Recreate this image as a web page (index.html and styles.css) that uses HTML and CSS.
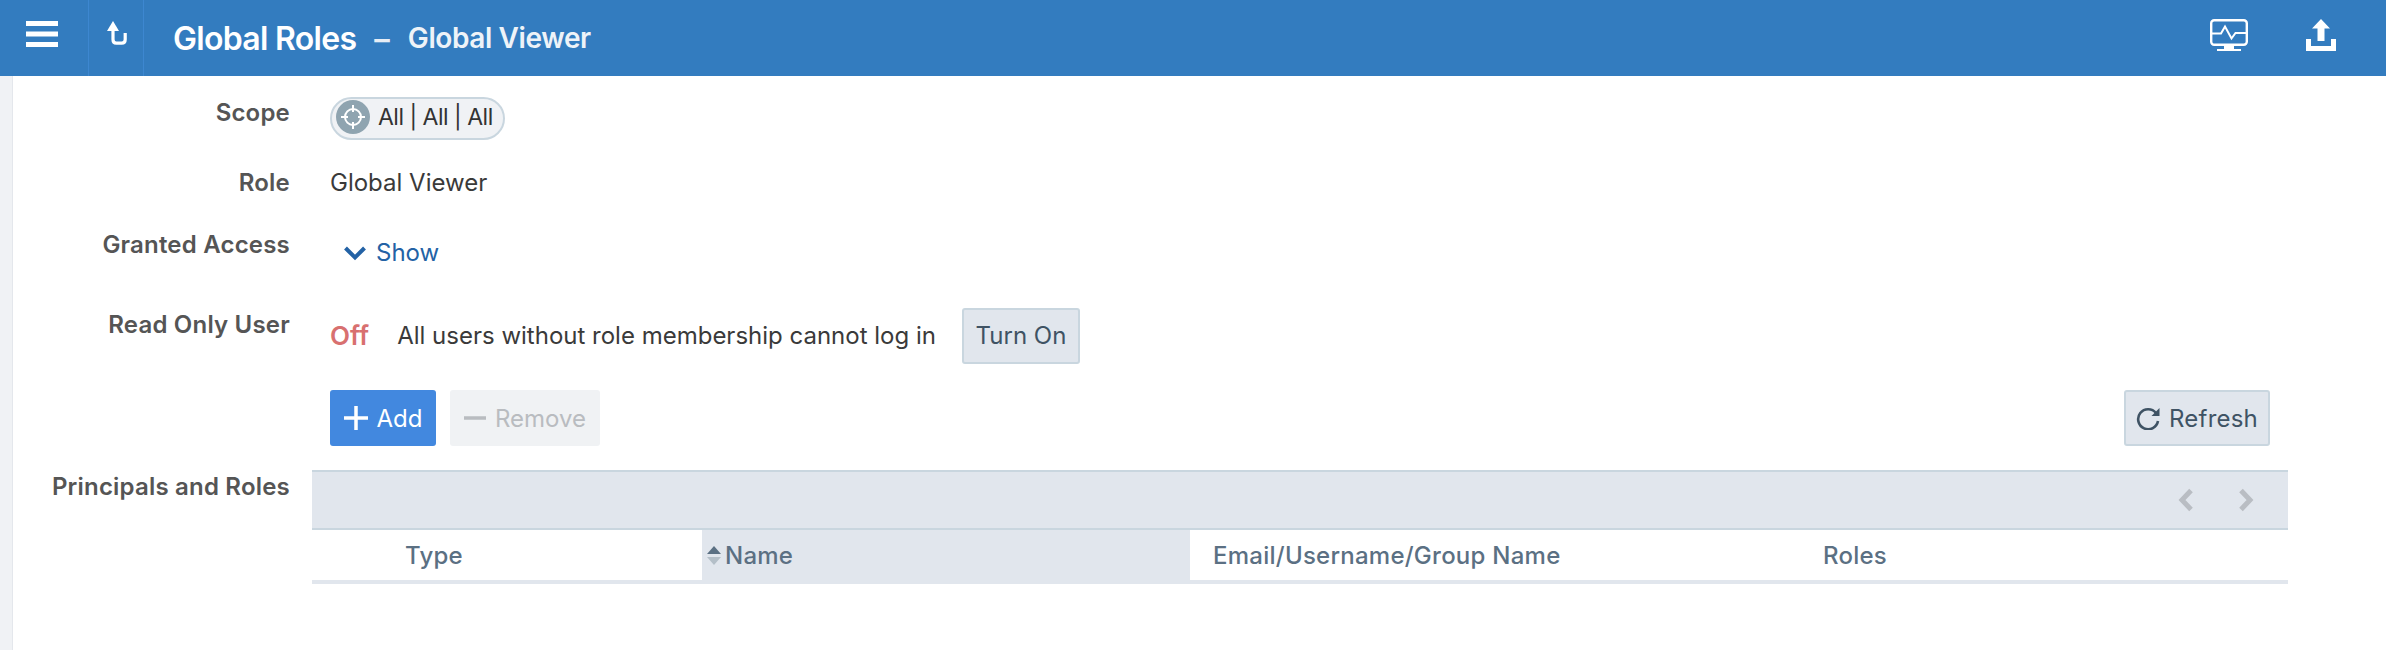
FILE: index.html

```html
<!DOCTYPE html>
<html lang="en">
<head>
  <meta charset="UTF-8" />
  <title>Global Roles - Global Viewer</title>
  <link rel="stylesheet" href="styles.css">
</head>
<body>
  <header class="topbar">
    <button class="bar-btn menu-btn" aria-label="Menu">
      <svg width="32" height="26" viewBox="0 0 32 26"><path d="M0 2.500h32M0 13h32M0 23.500h32" stroke="#fff" stroke-width="5" fill="none"/></svg>
    </button>
    <button class="bar-btn back-btn" aria-label="Up">
      <svg width="20" height="24" viewBox="0 0 20 24"><path d="M6 6v12.500c0 2.300 1 3.700 3.300 3.700h5.400c2.300 0 3.500-1.400 3.500-3.700V12" stroke="#fff" stroke-width="3.200" fill="none"/><path d="M6 0l6 10H0z" fill="#fff"/></svg>
    </button>
    <div class="title">
      <span class="title-main">Global Roles</span>
      <span class="title-dash">–</span>
      <span class="title-sub">Global Viewer</span>
    </div>
    <div class="bar-icons">
      <svg width="38" height="32" viewBox="0 0 38 32" fill="none" stroke="#fff"><rect x="1.200" y="1.200" width="35.600" height="24.600" rx="3" stroke-width="2.400"/><path d="M2 14.500h9l4-7 6.500 12 4-5.500H36" stroke-width="2"/><path d="M14 27h10v3H14z" fill="#fff" stroke="none"/><path d="M7 30h24v2H7z" fill="#fff" stroke="none"/></svg>
      <svg width="30" height="32" viewBox="0 0 30 32"><path d="M15 0l9 9.500h-5.500V22h-7V9.500H6z" fill="#fff"/><path d="M2.500 20v9.500h25V20" stroke="#fff" stroke-width="5" fill="none"/></svg>
    </div>
  </header>

  <main class="content">
    <div class="row row-scope">
      <label class="field-label">Scope</label>
      <span class="pill">
        <span class="pill-icon">
          <svg width="24" height="24" viewBox="0 0 24 24" fill="none" stroke="#fff" stroke-width="2"><circle cx="12" cy="12" r="8"/><path d="M12 0v7M12 17v7M0 12h7M17 12h7"/></svg>
        </span>
        All | All | All
      </span>
    </div>

    <div class="row row-role">
      <label class="field-label">Role</label>
      <span class="value">Global Viewer</span>
    </div>

    <div class="row row-access">
      <label class="field-label">Granted Access</label>
      <a class="show-link">
        <svg width="24" height="16" viewBox="0 0 24 16"><path d="M2.500 3l9.500 9.500L21.500 3" stroke="#2362a5" stroke-width="4" fill="none"/></svg>
        Show
      </a>
    </div>

    <div class="row row-readonly">
      <label class="field-label">Read Only User</label>
      <span class="status-off">Off</span>
      <span class="value readonly-text">All users without role membership cannot log in</span>
      <button class="btn btn-light turn-on">Turn On</button>
    </div>

    <div class="row row-actions">
      <button class="btn btn-add">
        <svg width="24" height="24" viewBox="0 0 24 24"><path d="M12 0v24M0 12h24" stroke="#fff" stroke-width="3.500"/></svg>
        Add
      </button>
      <button class="btn btn-remove">
        <svg width="22" height="24" viewBox="0 0 22 24"><path d="M0 12h22" stroke="#b9bcc0" stroke-width="3.500"/></svg>
        Remove
      </button>
      <button class="btn btn-light btn-refresh">
        <svg width="24" height="24" viewBox="0 0 24 24" fill="none"><path d="M20 7A10 10 0 1 0 22 15" stroke="#3f5364" stroke-width="2.600"/><path d="M23.500 2v8h-8z" fill="#3f5364"/></svg>
        Refresh
      </button>
    </div>

    <div class="row row-table">
      <label class="field-label">Principals and Roles</label>
      <div class="grid">
        <div class="grid-toolbar">
          <svg width="16" height="24" viewBox="0 0 16 24"><path d="M13 2.500L4 12l9 9.500" stroke="#b9bdc3" stroke-width="5" fill="none"/></svg>
          <svg width="16" height="24" viewBox="0 0 16 24"><path d="M3 2.500l9 9.500-9 9.500" stroke="#b9bdc3" stroke-width="5" fill="none"/></svg>
        </div>
        <div class="grid-head">
          <div class="col col-type">Type</div>
          <div class="col col-name">
            <span class="sort-arrows"><i class="sort-up"></i><i class="sort-down"></i></span>
            Name
          </div>
          <div class="col col-email">Email/Username/Group Name</div>
          <div class="col col-roles">Roles</div>
        </div>
      </div>
    </div>
  </main>
</body>
</html>
```

FILE: styles.css

```css
* {
  box-sizing: border-box;
}
html, body {
  height: 100%;
}
body {
  margin: 0;
  background: #fff;
  font-family: Inter, "Liberation Sans", sans-serif;
  font-size: 24px;
  color: #3a3a3a;
  overflow: hidden;
}

/* top bar */
.topbar {
  display: flex;
  align-items: center;
  height: 76px;
  padding-right: 50px;
  background: #337cbf;
  color: #fff;
}
.bar-btn {
  display: flex;
  align-items: center;
  justify-content: center;
  height: 76px;
  padding: 0;
  border: none;
  background: none;
}
.menu-btn {
  width: 89px;
  padding-right: 5px;
  padding-bottom: 8px;
  border-right: 1px solid #3d87d0;
}
.back-btn {
  width: 55px;
  padding-bottom: 10px;
  padding-left: 1px;
  border-right: 1px solid #3d87d0;
}
.title {
  display: flex;
  align-items: center;
  margin-left: 29px;
}
.title-main {
  font-size: 32px;
  font-weight: 600;
  letter-spacing: -0.7px;
}
.title-dash {
  margin: 0 18px;
  font-size: 31px;
  font-weight: 600;
  color: #e6edf5;
}
.title-sub {
  font-size: 28px;
  font-weight: 600;
  letter-spacing: -0.4px;
  color: #eef3f8;
}
.bar-icons {
  display: flex;
  align-items: center;
  gap: 58px;
  margin-left: auto;
  padding-bottom: 7px;
}

/* form */
.content {
  height: calc(100% - 76px);
  margin: 0;
  padding-right: 98px;
  background: #fff;
  border-left: 12px solid #f0f2f5;
  box-shadow: inset 1px 0 0 #e4e7ec;
}
.row {
  display: flex;
  align-items: flex-start;
}
.field-label {
  width: 278px;
  margin-right: 40px;
  text-align: right;
  line-height: 32px;
  font-weight: 600;
  letter-spacing: 0.2px;
  color: #555;
}
.value {
  line-height: 32px;
}
.row-scope {
  padding-top: 21px;
}
.pill {
  display: flex;
  align-items: center;
  gap: 8px;
  height: 43px;
  padding: 0 10px 3px 4px;
  border: 2px solid #c9d6df;
  border-radius: 22px;
  background: #f0f2f5;
  color: #333;
  font-size: 23px;
  letter-spacing: -0.5px;
}
.pill-icon {
  display: flex;
  align-items: center;
  justify-content: center;
  width: 34px;
  height: 34px;
  border-radius: 50%;
  background: #8fa4b0;
}
.row-role {
  margin-top: 27px;
}
.row-access {
  margin-top: 30px;
}
.show-link {
  display: flex;
  align-items: center;
  gap: 9px;
  margin: 8px 0 0 13px;
  line-height: 32px;
  color: #2362a5;
}
.row-readonly {
  align-items: center;
  height: 55px;
  margin-top: 39px;
}
.row-readonly .field-label {
  align-self: flex-start;
  margin-top: 1px;
}
.status-off {
  font-size: 26px;
  font-weight: 600;
  color: #d87070;
}
.readonly-text {
  margin-left: 28px;
}
.turn-on {
  width: 118px;
  margin-left: 26px;
}

/* buttons */
.btn {
  display: inline-flex;
  align-items: center;
  justify-content: center;
  gap: 9px;
  height: 56px;
  padding: 0;
  border: none;
  border-radius: 3px;
  font-family: inherit;
  font-size: 24px;
}
.btn-light {
  border: 2px solid #c9d6df;
  background: #e1e6ed;
  color: #3f5364;
}
.row-actions {
  margin-top: 27px;
  padding-left: 318px;
  padding-right: 18px;
}
.btn-add {
  width: 106px;
  background: #4288df;
  color: #fff;
}
.btn-remove {
  width: 150px;
  margin-left: 14px;
  background: #f0f2f4;
  color: #b9bcc0;
}
.btn-refresh {
  width: 146px;
  margin-left: auto;
  letter-spacing: 0.2px;
}

/* table */
.row-table {
  margin-top: 24px;
}
.row-table .field-label {
  margin-top: 1px;
  margin-right: 22px;
}
.grid {
  flex: 1;
}
.grid-toolbar {
  display: flex;
  align-items: center;
  justify-content: flex-end;
  gap: 44px;
  height: 60px;
  padding-right: 34px;
  border-top: 2px solid #c9d6df;
  border-bottom: 2px solid #c9d6df;
  background: #e1e6ed;
}
.grid-head {
  display: flex;
  height: 54px;
  border-bottom: 4px solid #e1e6ed;
  font-weight: 500;
  letter-spacing: 0.25px;
  color: #5b7083;
}
.col {
  display: flex;
  align-items: center;
}
.col-type {
  width: 390px;
  padding-left: 93px;
}
.col-name {
  width: 488px;
  gap: 4px;
  padding-left: 5px;
  background: #e1e6ed;
}
.col-email {
  width: 633px;
  padding-left: 23px;
}
.col-roles {
  flex: 1;
}
.sort-arrows {
  display: flex;
  flex-direction: column;
  gap: 3px;
}
.sort-up, .sort-down {
  width: 0;
  height: 0;
  border-left: 7px solid transparent;
  border-right: 7px solid transparent;
}
.sort-up {
  border-bottom: 8px solid #5b7083;
}
.sort-down {
  border-top: 8px solid #b4bfc8;
}
```
